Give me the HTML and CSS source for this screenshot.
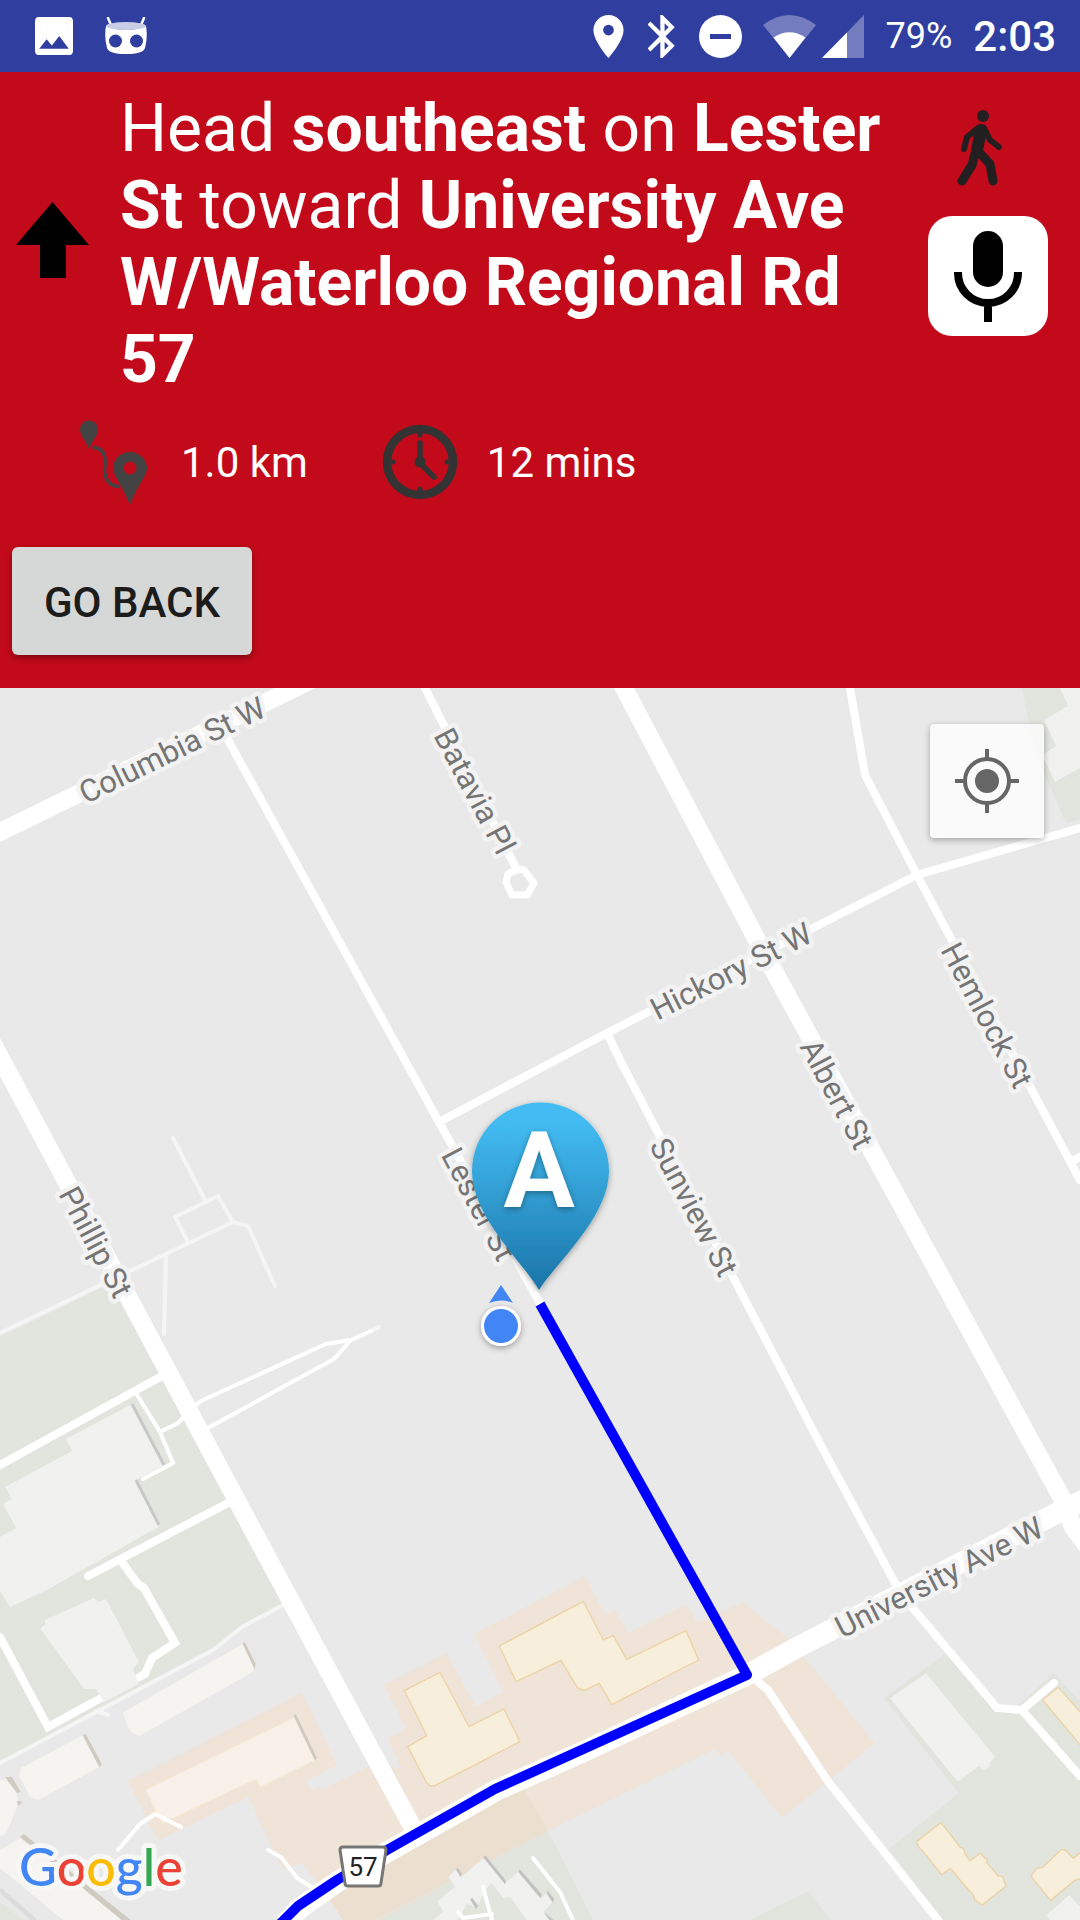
FILE: index.html
```html
<!DOCTYPE html>
<html lang="en">
<head>
<meta charset="utf-8">
<meta name="viewport" content="width=device-width, initial-scale=1">
<title>Walking directions</title>
<link rel="stylesheet" href="styles.css">
</head>
<body>
<div class="app">
  <div class="status">
    <div class="status-group notices">
      <svg width="38" height="38" viewBox="3 3 18 18" fill="#fff" aria-hidden="true"><path d="M21 19V5c0-1.100-.6-2-1.600-2H4.600C3.600 3 3 3.900 3 5v14c0 1.100.6 2 1.600 2h14.800c1 0 1.600-.9 1.600-2zM8.500 13.500l2.500 3.010L14.500 12l4.500 6H5l3.500-4.500z"/></svg>
      <svg width="42" height="38" viewBox="0 0 42 38" aria-hidden="true">
        <path d="M3 1l3 7M39 1l-3 7" stroke="#fff" stroke-width="2.500" stroke-linecap="round"/>
        <path fill="#fff" d="M1 9Q21 17 41 9Q43 20 40 31Q38 37 21 37Q4 37 2 31Q-1 20 1 9z"/>
        <ellipse cx="21" cy="9" rx="20" ry="4" fill="#c9cde6"/>
        <circle cx="10.500" cy="24" r="6.500" fill="#303f9f"/><circle cx="31.500" cy="24" r="6.500" fill="#303f9f"/>
      </svg>
    </div>
    <div class="status-group">
      <div class="modes">
        <svg width="31" height="43" viewBox="5 2 14 20" fill="#fff" aria-hidden="true"><path d="M12 2C8.130 2 5 5.130 5 9c0 5.250 7 13 7 13s7-7.750 7-13c0-3.870-3.130-7-7-7zm0 9.500a2.500 2.500 0 1 1 0-5 2.500 2.500 0 0 1 0 5z"/></svg>
        <svg width="27" height="43" viewBox="5.300 2 12.500 20" fill="#fff" aria-hidden="true"><path d="M17.710 7.710L12 2h-1v7.590L6.410 5 5 6.410 10.590 12 5 17.590 6.410 19 11 14.410V22h1l5.710-5.710-4.300-4.290 4.300-4.290zM13 5.830l1.880 1.880L13 9.590V5.830zm1.880 10.460L13 18.170v-3.760l1.880 1.880z"/></svg>
        <svg width="43" height="43" viewBox="0 0 43 43" aria-hidden="true"><circle cx="21.500" cy="21.500" r="21.500" fill="#fff"/><path d="M11 21.500h21" stroke="#303f9f" stroke-width="5"/></svg>
      </div>
      <div class="signals">
        <svg width="53" height="43" viewBox="0 0 53 43" fill="#fff" aria-hidden="true"><path opacity=".32" d="M0 10Q26.500-10 53 10L26.500 43z"/><path d="M10.500 22.500Q26.500 12 42.500 22.500L26.500 43z"/></svg>
        <svg width="42" height="43" viewBox="0 0 42 43" fill="#fff" aria-hidden="true"><path opacity=".32" d="M42 0v43H0z"/><path d="M25 17.500V43H0z"/></svg>
      </div>
      <span class="battery">79%</span>
      <time class="clock">2:03</time>
    </div>
  </div>

  <header class="panel">
    <div class="step">
      <svg class="turn" width="73" height="76" viewBox="0 0 73 76" aria-label="Straight ahead"><path d="M36.500 0L73 43H50v33H24V43H0z"/></svg>
      <h1 class="instruction">Head <b>southeast</b> on <b>Lester St</b> toward <b>University Ave W/Waterloo Regional Rd 57</b></h1>
      <div class="tools">
        <svg class="walk" width="46" height="76" viewBox="0 0 46 76" aria-label="Walking" fill="none" stroke="#231f20" stroke-linecap="round" stroke-linejoin="round">
          <circle cx="26" cy="6" r="6" fill="#231f20" stroke="none"/>
          <path d="M24 20L20 40" stroke-width="12"/>
          <path d="M21 18L10 27 7 39" stroke-width="6"/>
          <path d="M27 18L33 30 42 37" stroke-width="6"/>
          <path d="M19 40L15 55 5 71" stroke-width="9"/>
          <path d="M20 40L33 54 36 71" stroke-width="9"/>
        </svg>
        <button class="mic" type="button" aria-label="Speak">
          <svg width="68" height="92" viewBox="0 0 68 92" aria-hidden="true"><rect x="19" y="1" width="30" height="56" rx="15"/><path d="M4 42v1a30 30 0 0 0 60 0v-1M34 73v19" fill="none" stroke="#000" stroke-width="8"/></svg>
        </button>
      </div>
    </div>
    <div class="stats">
      <div class="stat">
        <svg width="76" height="86" viewBox="76 419 76 86" aria-hidden="true" fill="#424242"><path d="M89 420.500c-5 0-9 4-9 9 0 6 6 11 9 20 3-9 9-14 9-20 0-5-4-9-9-9z"/><path fill-rule="evenodd" d="M130 452c-9 0-17 7-17 16 0 8 9 16 17 37 8-21 17-29 17-37 0-9-8-16-17-16zm0 9.500a6.500 6.500 0 1 1 0 13 6.500 6.500 0 0 1 0-13z"/><path d="M94 447.500c9 1 12 8 11 18-2 11 3 20 13 21" fill="none" stroke="#424242" stroke-width="3.500" stroke-linecap="round"/></svg>
        <span>1.0 km</span>
      </div>
      <div class="stat">
        <svg width="76" height="76" viewBox="0 0 76 76" aria-hidden="true" fill="none" stroke="#333" stroke-linecap="round"><circle cx="38" cy="38" r="33" stroke-width="8.500"/><path d="M38 19v20l14 14" stroke-width="5.500" stroke-linejoin="round"/><path d="M38 6v5M38 65v5M6 38h5M65 38h5" stroke-width="5"/><circle cx="38" cy="38" r="5.500" fill="#333" stroke="none"/></svg>
        <span>12 mins</span>
      </div>
    </div>
    <button class="back" type="button">GO BACK</button>
  </header>

  <main class="map">
    <svg class="canvas" viewBox="0 688 1080 1232" preserveAspectRatio="xMidYMid slice" role="img" aria-label="Route map">
      <defs>
        <linearGradient id="pin" x1="0" y1="0" x2="0" y2="1"><stop offset=".1" stop-color="#43bcf2"/><stop offset="1" stop-color="#1a74a8"/></linearGradient>
        <filter id="soft" x="-30%" y="-30%" width="160%" height="160%"><feDropShadow dx="0" dy="2" stdDeviation="3" flood-opacity=".35"/></filter>
      </defs>

      <!-- land use -->
      <g class="green">
        <path d="M0 1337L103 1287 118 1280 283 1605 242 1627 213 1650 0 1765z"/>
        <path d="M1022 688H1080V820L1066 823 1046 778 1030 730z"/>
        <path d="M548 1831L593 1920H370z"/>
        <g transform="translate(740 1440) scale(.3333)">
          <path d="M433 775L617 640 772 803 835 795 943 698 1020 785V1440H610L447 1227 657 1060z"/>
          <path d="M30 1440L205 1355 272 1440z"/>
        </g>
        <path d="M0 1902L24 1920H0z"/>
      </g>
      <path class="retail" d="M128 1781L302 1693 337 1765 306 1781 311 1790 320 1787 323 1789 370 1766 401 1768 388 1739 406 1729 384 1685 447 1653 476 1707 503 1692 474 1634 585 1576 605 1614 615 1610 628 1633 687 1604 697 1623 743 1602 790 1640 875 1743 782 1818 728 1750 721 1756 715 1749 548 1831 377 1920H343L328 1897 302 1863 283 1870 248 1797 158 1841z"/>
      <path class="campus" d="M523 1787L548 1831 374 1920H343L328 1897 387 1855z"/>

      <!-- buildings -->
      <g class="grey">
        <path d="M132 1404L164 1465 136 1480 160 1526 47 1590 10 1607 0 1591V1537L16 1528 3 1504 12 1499 5 1487 72 1451 66 1439z"/>
        <path d="M1060 688L1068 706 1044 720 1056 746 1042 755 1055 782 1080 768V688z"/>
      </g>
      <path class="shade" d="M132 1404L164 1465M136 1480L159 1525"/>
      <g transform="translate(0 1500) scale(.3333)">
        <g class="stone">
          <path d="M368 638L732 430 765 495 760 515 418 708 395 697 382 680 378 662z"/>
          <path d="M62 805L250 705 300 800 115 900 90 890 58 830z"/>
          <path d="M0 842L20 835 45 870 57 905 42 945 18 1000 0 1010z"/>
          <path d="M0 1050L60 1015 375 1260H190L0 1105z"/>
        </g>
        <path class="wall" d="M727 430L735 427 767 492 764 508zM248 706L257 702 306 793 298 802zM15 832L35 830 62 875 52 880zM50 902L68 905 55 918zM60 1010L72 1003 392 1260H365z"/>
        <path d="M0 1170L105 1262" stroke="#dcdcdc" stroke-width="14"/>
        <path class="pink" d="M435 870L885 650 948 780 782 862 768 838 487 972z"/>
        <path class="wall" d="M880 646L888 643 951 774 945 782z"/>
      </g>
      <g transform="translate(360 1540) scale(.3333)">
        <g class="cream">
          <path d="M133 452L240 397 327 560 432 507 480 605 222 738 210 738 198 725 143 620 200 587z"/>
          <path d="M418 318L670 184 730 300 760 287 800 358 978 272 1016 360 755 494 718 430 672 452 652 443 603 361 468 425z"/>
        </g>
        <path class="grey" d="M265 1010L285 990 305 1010 370 955 435 1030 475 995 545 1075 560 1060 580 1085 550 1115 575 1140H500L450 1070 430 1075 395 1030 375 1050 350 1105 320 1090 300 1130 290 1140H220L250 1115 232 1085 285 1040z"/>
        <path class="silver" d="M370 952L376 946 438 1022 435 1033zM475 996L479 988 545 1063 541 1075zM560 1060L563 1052 583 1078 578 1088zM289 990L293 982 305 1000 302 1012zM330 1078L337 1074 355 1097 348 1107zM550 1115L580 1140H568z"/>
      </g>
      <g transform="translate(740 1440) scale(.3333)">
        <g class="grey">
          <path d="M450 775L558 700 765 950 748 970 750 978 733 990 717 978 653 1025z"/>
          <path d="M920 1425L988 1365 1020 1400V1440H930z"/>
        </g>
        <g class="cream">
          <path d="M1024 918L908 780 955 742 1024 820z"/>
          <path d="M530 1205L602 1148 625 1175 660 1222 670 1225 675 1242 690 1263 720 1240 742 1260 740 1268 775 1308 788 1310 798 1338 727 1395 705 1380 702 1368 660 1320 632 1285 605 1304 550 1235 535 1220z"/>
          <path d="M875 1305L890 1285 908 1282 965 1228 978 1232 1000 1255 1024 1236V1315L1003 1322 932 1382 875 1312z"/>
        </g>
      </g>

      <!-- footpaths -->
      <path class="path" d="M0 1333L233 1222 248 1226 275 1286M173 1138L205 1200M188 1242L175 1217 218 1196 233 1222M166 1254L164 1334M283 1605L242 1627 213 1650 0 1763M96 1711L108 1715M371 1331L379 1327"/>
      <path class="lane" d="M136 1393L160 1432 173 1463 143 1479M160 1432L178 1423 183 1418M195 1405L203 1400 326 1344 351 1340 371 1331M208 1428L334 1359 351 1340M118 1850L140 1824 155 1814 181 1827M268 1850L281 1857 297 1878 315 1889M533 1858L560 1892 573 1920M483 1887L492 1920M458 1912L463 1918 492 1914"/>

      <!-- streets -->
      <path class="street" d="M0 1465L162 1376M228 1503L88 1576M122 1562L137 1583 144 1588 175 1643 152 1658 145 1674 48 1727 0 1637M228 740L439 1122 541 1305M425 688L517 870M439 1122L607 1033 917 875 1080 828M607 1033L620 1060 818 1440 895 1583 912 1607 997 1708 1022 1710 1080 1776M1022 1710L1054 1683M850 688L865 775 917 875 1080 1180M1074 1160L1080 1157M747 1673L768 1690 827 1780 938 1920"/>
      <path class="loop" d="M518 869L524 870 534 883 527 895H512L506 882 508 874z"/>
      <path class="avenue" d="M-20 842L0 832 295 688 336 668M-16 1028L0 1057 23 1100 258 1540 413 1828M613 668L624 688 757 940 877 1160 1030 1440 1063 1500 1073 1527 1090 1550"/>
      <path class="avenue major" d="M1084 1500L1063 1510 798 1647 747 1675 587 1750 497 1790 387 1852 337 1882 300 1908 285 1924"/>
      <g class="grey"><path d="M94 1598l5 4 7-3 33 63-6 7 6 15-35 18-8-13h-12L40 1628l5-3v-5z"/></g>

      <!-- street names -->
      <g class="names">
        <text transform="translate(172 750) rotate(-26)" y="11">Columbia St W</text>
        <text transform="translate(475 791) rotate(62)" y="11">Batavia Pl</text>
        <text transform="translate(731 971) rotate(-27)" y="11">Hickory St W</text>
        <text transform="translate(987 1015) rotate(62)" y="11">Hemlock St</text>
        <text transform="translate(837 1094) rotate(62)" y="11">Albert St</text>
        <text transform="translate(694 1207) rotate(62)" y="11">Sunview St</text>
        <text transform="translate(479 1204) rotate(62)" y="11">Lester St</text>
        <text transform="translate(96 1242) rotate(62)" y="11">Phillip St</text>
        <text transform="translate(939 1577) rotate(-27)" y="11">University Ave W</text>
      </g>

      <!-- route -->
      <path class="route" d="M540 1304L747 1675 495 1789 387 1850 337 1880 298 1906 280 1924"/>
      <path d="M343 1847H383Q386 1847 386 1850L381 1883Q381 1886 378 1886H348Q345 1886 345 1883L340 1850Q340 1847 343 1847z" fill="#fff" stroke="#757575" stroke-width="3"/>
      <text class="shield" x="363" y="1876">57</text>

      <!-- current position -->
      <g filter="url(#soft)"><circle cx="501" cy="1326" r="20" fill="#fff"/></g>
      <circle cx="501" cy="1326" r="17" fill="#4285f4"/>
      <path d="M501 1285L513 1303Q501 1298 489 1303z" fill="#4285f4"/>

      <!-- start marker -->
      <path filter="url(#soft)" fill="url(#pin)" d="M539 1290C523 1262 472 1217 472 1171a68.500 68.500 0 0 1 137 0C609 1217 555 1264 539 1290z"/>
      <text class="letter" x="539" y="1207" filter="url(#soft)">A</text>

      <text class="google" x="19" y="1886"><tspan fill="#4285f4">G</tspan><tspan fill="#ea4335">o</tspan><tspan fill="#fbbc05">o</tspan><tspan fill="#4285f4">g</tspan><tspan fill="#34a853">l</tspan><tspan fill="#ea4335">e</tspan></text>
    </svg>
    <button class="locate" type="button" aria-label="My location">
      <svg width="64" height="64" viewBox="0 0 64 64" aria-hidden="true" fill="none" stroke="#666" stroke-width="4"><circle cx="32" cy="32" r="22"/><circle cx="32" cy="32" r="12" fill="#666" stroke="none"/><path d="M32 0v10M32 54v10M0 32h10M54 32h10"/></svg>
    </button>
  </main>
</div>
</body>
</html>
```
FILE: styles.css
```css
* { box-sizing: border-box; }

body {
  margin: 0;
  font-family: Roboto, "Noto Sans", sans-serif;
  color: #fff;
}

button {
  font: inherit;
  border: 0;
  padding: 0;
  cursor: pointer;
}

svg { display: block; flex: none; }

.app {
  min-height: 100vh;
  display: flex;
  flex-direction: column;
}

/* status bar */
.status {
  height: 72px;
  padding: 0 24px 0 35px;
  display: flex;
  align-items: center;
  justify-content: space-between;
  background: #303f9f;
}

.status-group {
  display: flex;
  align-items: center;
  gap: 21px;
}

.notices { gap: 32px; }

.modes {
  display: flex;
  gap: 24px;
}

.signals {
  display: flex;
  gap: 6px;
}

.battery { font-size: 36px; }

.clock {
  font-size: 42px;
  font-weight: 500;
}

/* directions panel */
.panel {
  padding: 18px 0 33px;
  background: #c20a1a;
}

.step {
  display: grid;
  grid-template-columns: 120px 1fr 180px;
}

.turn {
  align-self: center;
  margin: 0 0 8px 16px;
}

.instruction {
  margin: 0;
  font-size: 66px;
  line-height: 77px;
  font-weight: 400;
}

.instruction b { font-weight: 700; }

.tools {
  display: flex;
  flex-direction: column;
  align-items: center;
  gap: 30px;
  padding: 20px 4px 0 0;
}

.walk { margin-right: 16px; }

.mic {
  width: 120px;
  height: 120px;
  border-radius: 24px;
  display: grid;
  place-items: center;
  background: #fff;
}

.stats {
  display: flex;
  gap: 74px;
  padding: 21px 76px 0;
}

.stat {
  display: flex;
  align-items: center;
  gap: 29px;
  font-size: 42px;
}

.back {
  display: block;
  width: 240px;
  height: 108px;
  padding-top: 2px;
  margin: 42px 0 0 12px;
  border-radius: 6px;
  background: #d6d7d7;
  color: #1c1c1c;
  font-size: 42px;
  font-weight: 500;
  box-shadow: 0 3px 6px rgba(0, 0, 0, .35);
}

/* map */
.map {
  position: relative;
  flex: 1;
  min-height: 600px;
  overflow: hidden;
  background: #e9e9e9;
}

.canvas {
  position: absolute;
  inset: 0;
  width: 100%;
  height: 100%;
}

.locate {
  position: absolute;
  top: 36px;
  right: 36px;
  width: 114px;
  height: 114px;
  border-radius: 4px;
  display: grid;
  place-items: center;
  background: rgba(255, 255, 255, .75);
  box-shadow: 0 2px 6px rgba(0, 0, 0, .3);
}

.green { fill: #e2e4de; }
.retail { fill: #efe4d7; }
.campus { fill: #ebdfd0; }
.grey { fill: #f1f1f0; }
.stone { fill: #f5f4f0; }
.wall { fill: #d0cbc0; }
.silver { fill: #c2c2c0; }
.pink { fill: #f9f0ea; stroke: #f3e8d3; stroke-width: 4; }
.cream { fill: #f7eedb; stroke: #ecd3a6; stroke-width: 4; }
.shade { fill: none; stroke: #c8c8c8; stroke-width: 3; }

.path, .lane, .street, .loop, .avenue, .route { fill: none; }
.path { stroke: #f5f5f5; stroke-width: 4; stroke-linecap: round; }
.lane { stroke: #fff; stroke-width: 4; stroke-linecap: round; }
.street { stroke: #fff; stroke-width: 8; stroke-linecap: round; }
.loop { stroke: #fff; stroke-width: 7; }
.avenue { stroke: #fff; stroke-width: 18; }
.major { stroke-width: 21; }
.route { stroke: #00f; stroke-width: 10; stroke-linejoin: round; }

.names text {
  font-size: 31px;
  fill: #757575;
  stroke: #f3f3f3;
  stroke-width: 9px;
  stroke-linejoin: round;
  paint-order: stroke;
  text-anchor: middle;
}

.shield {
  font-size: 26px;
  fill: #222;
  text-anchor: middle;
}

.letter {
  font-size: 106px;
  font-weight: 700;
  fill: #fff;
  text-anchor: middle;
}

.google {
  font-family: Lato, Roboto, sans-serif;
  font-size: 52px;
  font-weight: 500;
  stroke: #f7f7f6;
  stroke-width: 10px;
  stroke-linejoin: round;
  paint-order: stroke;
}
```
